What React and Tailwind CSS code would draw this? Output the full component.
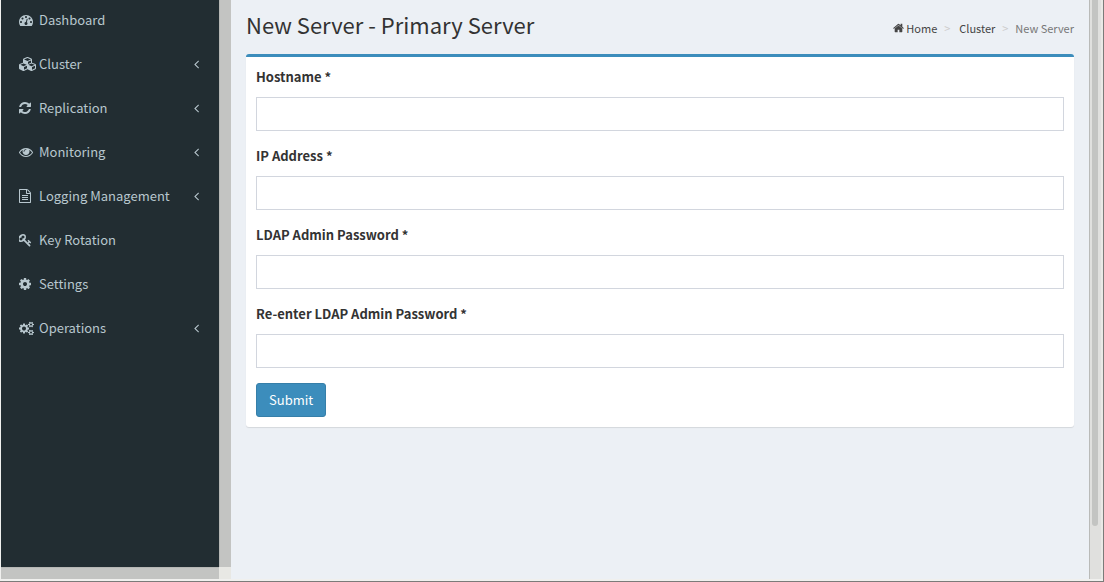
const ICONS = {
  dashboard: {
    box: "0 0 1792 1792",
    size: "w-[14px]",
    d: "M384 1152q0-53-37.5-90.5t-90.5-37.5-90.5 37.5-37.5 90.5 37.5 90.5 90.5 37.5 90.5-37.5 37.5-90.5zm192-448q0-53-37.5-90.5t-90.5-37.5-90.5 37.5-37.5 90.5 37.5 90.5 90.5 37.5 90.5-37.5 37.5-90.5zm428 481l101-382q6-26-7.5-48.5t-38.5-29.5-48 6.5-30 39.5l-101 382q-60 5-107 43.5t-63 98.5q-20 77 20 146t117 89 146-20 89-117q16-60-6-117t-72-91zm660-33q0-53-37.5-90.5t-90.5-37.5-90.5 37.5-37.5 90.5 37.5 90.5 90.5 37.5 90.5-37.5 37.5-90.5zm-640-640q0-53-37.5-90.5t-90.5-37.5-90.5 37.5-37.5 90.5 37.5 90.5 90.5 37.5 90.5-37.5 37.5-90.5zm448 192q0-53-37.5-90.5t-90.5-37.5-90.5 37.5-37.5 90.5 37.5 90.5 90.5 37.5 90.5-37.5 37.5-90.5zm320 448q0 261-141 483-19 29-54 29h-1402q-35 0-54-29-141-221-141-483 0-182 71-348t191-286 286-191 348-71 348 71 286 191 191 286 71 348z",
  },
  cubes: {
    box: "0 0 2304 1792",
    size: "w-[18px]",
    d: "M640 1632l384-192v-314l-384 164v342zm-64-454l404-173-404-173-404 173zm1088 454l384-192v-314l-384 164v342zm-64-454l404-173-404-173-404 173zm-448-293l384-165v-266l-384 164v267zm-64-379l441-189-441-189-441 189zm1088 518v416q0 36-19 67t-52 47l-448 224q-25 14-57 14t-57-14l-448-224q-4-2-7-4-2 2-7 4l-448 224q-25 14-57 14t-57-14l-448-224q-33-16-52-47t-19-67v-416q0-38 21.5-70t56.5-48l434-186v-400q0-38 21.5-70t56.5-48l448-192q23-10 50-10t50 10l448 192q35 16 56.5 48t21.5 70v400l434 186q36 16 57 48t21 70z",
  },
  refresh: {
    box: "128 0 1536 1792",
    size: "w-[12px]",
    d: "M1639 1056q0 5-1 7-64 268-268 434.5t-478 166.5q-146 0-282.5-55t-243.5-157l-129 129q-19 19-45 19t-45-19-19-45v-448q0-26 19-45t45-19h448q26 0 45 19t19 45-19 45l-137 137q71 66 161 102t187 36q134 0 250-65t186-179q11-17 53-117 8-23 30-23h192q13 0 22.5 9.5t9.5 22.5zm25-800v448q0 26-19 45t-45 19h-448q-26 0-45-19t-19-45 19-45l138-138q-148-137-349-137-134 0-250 65t-186 179q-11 17-53 117-8 23-30 23h-199q-13 0-22.5-9.5t-9.5-22.5v-7q65-268 270-434.5t480-166.5q146 0 284 55.5t245 156.5l130-129q19-19 45-19t45 19 19 45z",
  },
  eye: {
    box: "0 0 1792 1792",
    size: "w-[14px]",
    d: "M1664 960q-152-236-381-353 61 104 61 225 0 185-131.5 316.5t-316.5 131.5-316.5-131.5-131.5-316.5q0-121 61-225-229 117-381 353 133 205 333.5 326.5t434.5 121.5 434.5-121.5 333.5-326.5zm-720-384q0-20-14-34t-34-14q-125 0-214.5 89.5t-89.5 214.5q0 20 14 34t34 14 34-14 14-34q0-86 61-147t147-61q20 0 34-14t14-34zm848 384q0 34-20 69-140 230-376.5 368.5t-499.5 138.5-499.5-139-376.5-368q-20-35-20-69t20-69q140-229 376.5-368t499.5-139 499.5 139 376.5 368q20 35 20 69z",
  },
  file: {
    box: "128 0 1536 1792",
    size: "w-[12px]",
    d: "M1596 380q28 28 48 76t20 88v1152q0 40-28 68t-68 28h-1344q-40 0-68-28t-28-68v-1600q0-40 28-68t68-28h896q40 0 88 20t76 48zm-444-244v376h376q-10-29-22-41l-313-313q-12-12-41-22zm384 1528v-1024h-416q-40 0-68-28t-28-68v-416h-768v1536h1280zm-1024-864q0-14 9-23t23-9h704q14 0 23 9t9 23v64q0 14-9 23t-23 9h-704q-14 0-23-9t-9-23v-64zm736 224q14 0 23 9t9 23v64q0 14-9 23t-23 9h-704q-14 0-23-9t-9-23v-64q0-14 9-23t23-9h704zm0 256q14 0 23 9t9 23v64q0 14-9 23t-23 9h-704q-14 0-23-9t-9-23v-64q0-14 9-23t23-9h704z",
  },
  key: {
    box: "128 0 1664 1792",
    size: "w-[13px]",
    d: "M832 512q0-80-56-136t-136-56-136 56-56 136q0 42 19 83-41-19-83-19-80 0-136 56t-56 136 56 136 136 56 136-56 56-136q0-42-19-83 41 19 83 19 80 0 136-56t56-136zm851 704q0 17-49 66t-66 49q-9 0-28.5-16t-36.5-33-38.5-40-24.5-26l-96 96 220 220q28 28 28 68 0 42-39 81t-81 39q-40 0-68-28l-671-671q-176 131-365 131-163 0-265.5-102.5t-102.5-265.5q0-160 95-313t248-248 313-95q163 0 265.5 102.5t102.5 265.5q0 189-131 365l355 355 96-96q-3-3-26-24.5t-40-38.5-33-36.5-16-28.5q0-17 49-66t66-49q13 0 23 10 6 6 46 44.5t82 79.5 86.5 86 73 78 28.5 41z",
  },
  cog: {
    box: "128 0 1536 1792",
    size: "w-[12px]",
    d: "M1152 896q0-106-75-181t-181-75-181 75-75 181 75 181 181 75 181-75 75-181zm512-109v222q0 12-8 23t-20 13l-185 28q-19 54-39 91 35 50 107 138 10 12 10 25t-9 23q-27 37-99 108t-94 71q-12 0-26-9l-138-108q-44 23-91 38-16 136-29 186-7 28-36 28h-222q-14 0-24.5-8.5t-11.5-21.5l-28-184q-49-16-90-37l-141 107q-10 9-25 9-14 0-25-11-126-114-165-168-7-10-7-23 0-12 8-23 15-21 51-66.5t54-70.5q-27-50-41-99l-183-27q-13-2-21-12.5t-8-23.5v-222q0-12 8-23t19-13l186-28q14-46 39-92-40-57-107-138-10-12-10-24 0-10 9-23 26-36 98.5-107.5t94.5-71.5q13 0 26 10l138 107q44-23 91-38 16-136 29-186 7-28 36-28h222q14 0 24.5 8.5t11.5 21.5l28 184q49 16 90 37l142-107q9-9 24-9 13 0 25 10 129 119 165 170 7 8 7 22 0 12-8 23-15 21-51 66.5t-54 70.5q26 50 41 98l183 28q13 2 21 12.5t8 23.5z",
  },
  cogs: {
    box: "0 0 1920 1792",
    size: "w-[15px]",
    d: "M896 960q0-106-75-181t-181-75-181 75-75 181 75 181 181 75 181-75 75-181zm768 512q0-52-38-90t-90-38-90 38-38 90q0 53 37.5 90.5t90.5 37.5 90.5-37.5 37.5-90.5zm0-1024q0-52-38-90t-90-38-90 38-38 90q0 53 37.5 90.5t90.5 37.5 90.5-37.5 37.5-90.5zm-384 421v185q0 10-7 19.5t-16 10.5l-155 24q-11 35-32 76 34 48 90 115 7 11 7 20 0 12-7 19-23 30-82.5 89.5t-78.5 59.5q-11 0-21-7l-115-90q-37 19-77 31-11 108-23 155-7 24-30 24h-186q-11 0-20-7.5t-10-17.5l-23-153q-34-10-75-31l-118 89q-7 7-20 7-11 0-21-8-144-133-144-160 0-9 7-19 10-14 41-53t47-61q-23-44-35-82l-152-24q-10-1-17-9.5t-7-19.5v-185q0-10 7-19.5t16-10.5l155-24q11-35 32-76-34-48-90-115-7-11-7-20 0-12 7-20 22-30 82-89t79-59q11 0 21 7l115 90q34-18 77-32 11-108 23-154 7-24 30-24h186q11 0 20 7.5t10 17.5l23 153q34 10 75 31l118-89q8-7 20-7 11 0 21 8 144 133 144 160 0 8-7 19-12 16-42 54t-45 60q23 48 34 82l152 23q10 2 17 10.5t7 19.5zm640 533v140q0 16-149 31-12 27-30 52 51 113 51 138 0 4-4 7-122 71-124 71-8 0-46-47t-52-68q-20 2-30 2t-30-2q-14 21-52 68t-46 47q-2 0-124-71-4-3-4-7 0-25 51-138-18-25-30-52-149-15-149-31v-140q0-16 149-31 13-29 30-52-51-113-51-138 0-4 4-7 4-2 35-20t59-34 30-16q8 0 46 46.5t52 67.5q20-2 30-2t30 2q51-71 92-112l6-2q4 0 124 70 4 3 4 7 0 25-51 138 17 23 30 52 149 15 149 31zm0-1024v140q0 16-149 31-12 27-30 52 51 113 51 138 0 4-4 7-122 71-124 71-8 0-46-47t-52-68q-20 2-30 2t-30-2q-14 21-52 68t-46 47q-2 0-124-71-4-3-4-7 0-25 51-138-18-25-30-52-149-15-149-31v-140q0-16 149-31 13-29 30-52-51-113-51-138 0-4 4-7 4-2 35-20t59-34 30-16q8 0 46 46.5t52 67.5q20-2 30-2t30 2q51-71 92-112l6-2q4 0 124 70 4 3 4 7 0 25-51 138 17 23 30 52 149 15 149 31z",
  },
  angleLeft: {
    box: "576 0 640 1792",
    size: "w-[5px]",
    d: "M1203 544q0 13-10 23l-393 393 393 393q10 10 10 23t-10 23l-50 50q-10 10-23 10t-23-10l-466-466q-10-10-10-23t10-23l466-466q10-10 23-10t23 10l50 50q10 10 10 23z",
  },
  home: {
    box: "64 0 1664 1792",
    size: "w-[11px]",
    d: "M1472 992v480q0 26-19 45t-45 19h-384v-384h-256v384h-384q-26 0-45-19t-19-45v-480q0-1 .5-3t.5-3l575-474 575 474q1 2 1 6zm223-69l-62 74q-8 9-21 11h-3q-13 0-21-7l-692-577-692 577q-12 8-24 7-13-2-21-11l-62-74q-8-10-7-23.5t11-21.5l719-599q32-26 76-26t76 26l244 204v-195q0-14 9-23t23-9h192q14 0 23 9t9 23v408l219 182q10 8 11 21.5t-7 23.5z",
  },
};

function Icon({ name, height = "h-[14px]" }) {
  const { box, size, d } = ICONS[name];
  return (
    <svg viewBox={box} className={`${size} ${height} shrink-0 fill-current`} aria-hidden="true">
      <path d={d} />
    </svg>
  );
}

const MENU = [
  { label: "Dashboard", icon: "dashboard" },
  { label: "Cluster", icon: "cubes", sub: true },
  { label: "Replication", icon: "refresh", sub: true },
  { label: "Monitoring", icon: "eye", sub: true },
  { label: "Logging Management", icon: "file", sub: true },
  { label: "Key Rotation", icon: "key" },
  { label: "Settings", icon: "cog" },
  { label: "Operations", icon: "cogs", sub: true },
];

const FIELDS = [
  { id: "hostname", label: "Hostname *", type: "text" },
  { id: "ip", label: "IP Address *", type: "text" },
  { id: "password", label: "LDAP Admin Password *", type: "password" },
  { id: "password-again", label: "Re-enter LDAP Admin Password *", type: "password" },
];

function Sidebar() {
  return (
    <aside className="grid shrink-0 grid-cols-[218px_12px] grid-rows-[1fr_12px]">
      <nav className="overflow-hidden bg-[#222d32]">
        <ul className="-mt-0.5">
          {MENU.map((item) => (
            <li key={item.label}>
              <a href="#" className="flex h-11 items-center pr-5 pl-[18px] text-[13px] text-[#b8c7ce]">
                <span className="flex w-5 shrink-0">
                  <Icon name={item.icon} />
                </span>
                <span className="flex-1 whitespace-nowrap">{item.label}</span>
                {item.sub && <Icon name="angleLeft" />}
              </a>
            </li>
          ))}
        </ul>
      </nav>
      <div className="border-l border-[#b6b7b5] bg-[#c3c4c2]" />
      <div className="border-t border-[#b6b7b5] bg-[#c3c4c2]" />
      <div className="bg-[#e8e8e4]" />
    </aside>
  );
}

function Breadcrumb() {
  return (
    <ol className="flex items-center pt-2 text-[11px] leading-4 text-[#444]">
      <li>
        <a href="#" className="flex items-center gap-0.5">
          <Icon name="home" height="h-[12px]" />
          Home
        </a>
      </li>
      <li className="flex items-center">
        <span className="w-[22px] pl-[7px] text-[#ccc]">&gt;</span>
        <a href="#">Cluster</a>
      </li>
      <li className="flex items-center text-[#777]">
        <span className="w-5 pl-[7px] text-[#ccc]">&gt;</span>
        New Server
      </li>
    </ol>
  );
}

export default function App() {
  return (
    <div className="flex h-screen flex-col border-r border-b border-[#7b7b79] bg-[#f0f0ee] pb-0.5 pl-px font-['Noto_Sans_CJK_SC',sans-serif]">
      <div className="flex min-h-0 flex-1">
        <Sidebar />
        <main className="min-w-0 flex-1 bg-[#ecf0f5] px-[15px]">
          <header className="flex items-start justify-between pt-3 pb-[18px]">
            <h1 className="text-[22px] leading-6 text-[#333]">New Server - Primary Server</h1>
            <Breadcrumb />
          </header>
          <form
            className="rounded-[3px] border-t-3 border-[#3c8dbc] bg-white p-2.5 shadow-[0_1px_1px_rgba(0,0,0,0.1)]"
            onSubmit={(e) => e.preventDefault()}
          >
            {FIELDS.map((f) => (
              <div key={f.id} className="mb-[15px]">
                <label htmlFor={f.id} className="mb-2.5 block text-[13px] leading-5 font-bold text-[#333]">
                  {f.label}
                </label>
                <input
                  id={f.id}
                  type={f.type}
                  className="block h-[34px] w-full border border-[#d2d6de] bg-white px-3 text-[13px]"
                />
              </div>
            ))}
            <button
              type="submit"
              className="block h-[34px] rounded-[3px] border border-[#367fa9] bg-[#3c8dbc] px-3 text-[13px] leading-5 text-white"
            >
              Submit
            </button>
          </form>
        </main>
        <div className="flex w-[14px] shrink-0 flex-col border-r-2 border-l border-r-[#e9e9e6] border-l-[#b9bab8] bg-[#e0e0de] pr-[3px] pl-0.5">
          <div className="h-[526px] rounded-b-full bg-[#c3c4c2]" />
        </div>
      </div>
    </div>
  );
}
